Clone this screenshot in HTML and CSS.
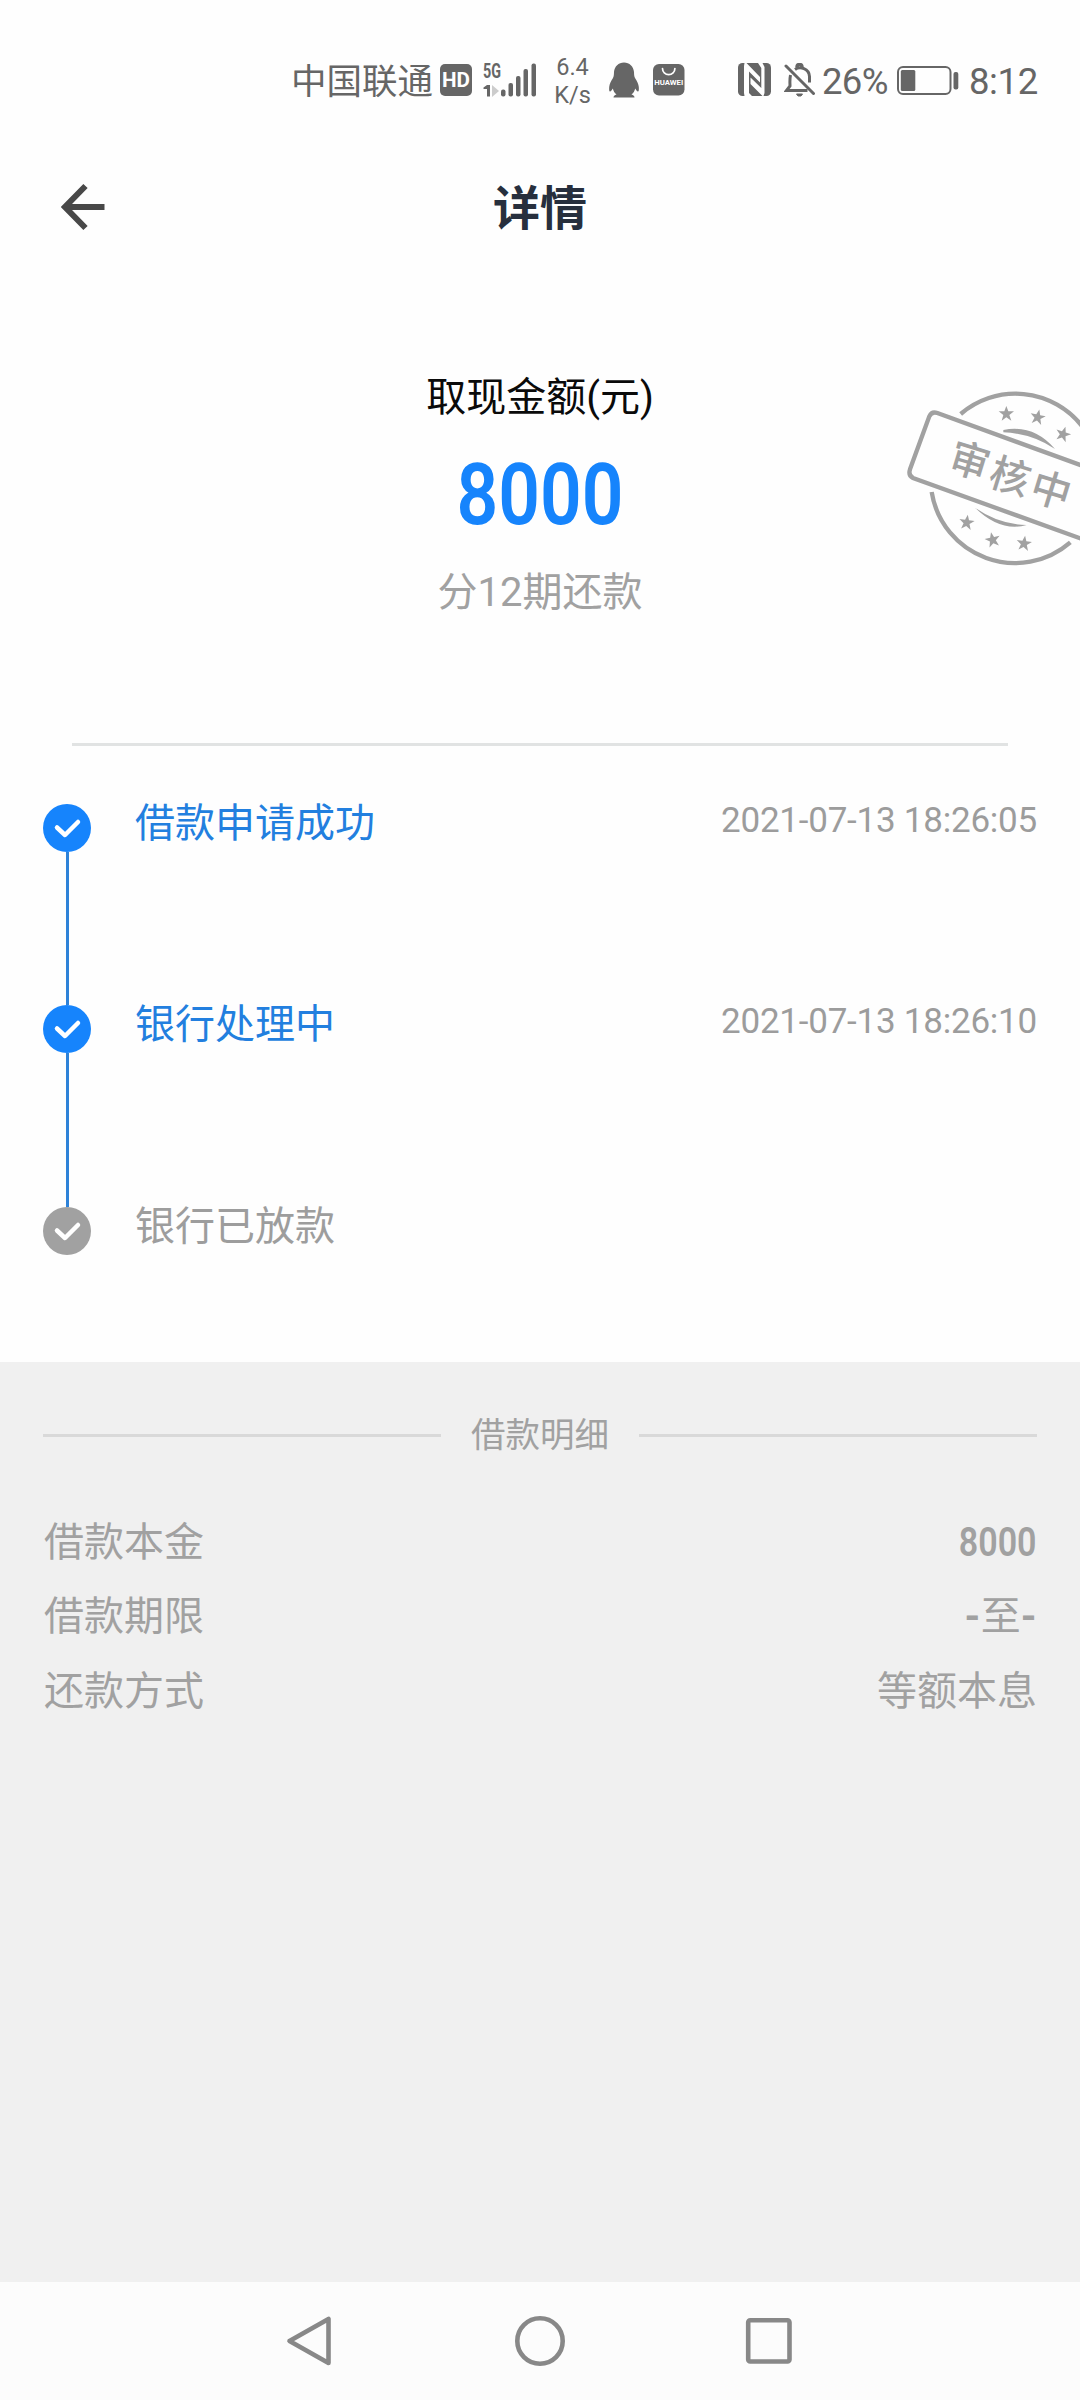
FILE: index.html
```html
<!DOCTYPE html>
<html lang="zh-CN">
<head>
<meta charset="utf-8">
<title>详情</title>
<link rel="stylesheet" href="styles.css">
</head>
<body>
<div class="screen">
  <div class="status">
    <span class="carrier">中国联通</span>
    <svg class="hd" width="32" height="32" viewBox="0 0 32 32"><rect width="32" height="32" rx="5" fill="#666"/><text x="16" y="23" text-anchor="middle" class="svg-hd" textLength="28" lengthAdjust="spacingAndGlyphs">HD</text></svg>
    <svg class="signal" width="54" height="44" viewBox="0 -6 54 44" fill="#666">
      <text x="0" y="15" class="svg-5g" textLength="18" lengthAdjust="spacingAndGlyphs">5G</text>
      <path d="M4 22h3v11.500h-3v-7.500h-3.500v-1.500z"/><path d="M9 22l7 6-7 6z" fill="#ccc"/>
      <rect x="18" y="26.500" width="4.500" height="7" rx="2"/><rect x="25.500" y="20" width="4.500" height="13.500" rx="2"/><rect x="33" y="13" width="4.500" height="20.500" rx="2"/><rect x="40.500" y="6" width="4.500" height="27.500" rx="2"/><rect x="48.500" y="0.500" width="4.500" height="33" rx="2"/>
    </svg>
    <div class="speed"><span>6.4</span><span>K/s</span></div>
    <svg class="qq" width="30" height="36" viewBox="0 0 30 36" fill="#666"><path d="M15 0.500C9.500 0.500 5.500 4.500 5 10C4.900 12 5 14 4 16C2 19 .5 22 .2 25C0 28 .2 29.500 1 29.500C2 29.500 3 28 3.800 26.500C4.500 29 5.500 31 7.500 32.500C5.500 33 4.500 34 4.500 35.500H25.500C25.500 34 24.500 33 22.500 32.500C24.500 31 25.500 29 26.200 26.500C27 28 28 29.500 29 29.500C29.800 29.500 30 28 29.800 25C29.500 22 28 19 26 16C25 14 25.100 12 25 10C24.500 4.500 20.500 0.500 15 0.500Z"/></svg>
    <svg class="huawei" width="32" height="32" viewBox="0 0 32 32"><rect width="31.500" height="31.500" rx="6" fill="#666"/><path d="M9.500 4.500a6.200 6.200 0 0 0 12.400 0" fill="none" stroke="#fff" stroke-width="1.700" stroke-linecap="round"/><text x="15.700" y="21.300" text-anchor="middle" class="svg-huawei" textLength="29" lengthAdjust="spacingAndGlyphs">HUAWEI</text></svg>
    <svg class="nfc" width="33" height="33" viewBox="0 0 33 33"><rect width="33" height="33" rx="4.500" fill="#666"/><path d="M6.500 33L6 30V3L6.500 0H8.500L22 14V19.500L11 8.500V30L14 33ZM20 0H24.500L26.500 4V30L25.500 33H24.500L12.500 21V14.500L23.300 25V5Z" fill="#fff"/></svg>
    <svg class="bell" width="32" height="34" viewBox="0 0 32 34" fill="none" stroke="#666" stroke-width="3"><path d="M2 3l27.500 27.500" stroke-linecap="round"/><path d="M6.500 12c-1 5-.5 8-.5 11l-3.500 4.500h21"/><path d="M11 6.500c5-3.500 14-1 14.500 7v6"/><path d="M13 4.500c0-4 5-4 5 0" stroke-width="3.500"/><path d="M12.500 31h6l-1.500 2h-3z" fill="#666" stroke-width="1"/></svg>
    <span class="pct">26%</span>
    <svg class="battery" width="62" height="29" viewBox="0 0 62 29"><rect x="1" y="1" width="52.500" height="27" rx="5" fill="none" stroke="#666" stroke-width="2"/><rect x="3.800" y="4" width="14.500" height="21" rx="1.500" fill="#666"/><rect x="56.500" y="6" width="4.800" height="17.500" rx="2" fill="#666"/></svg>
    <span class="clock">8:12</span>
  </div>

  <header class="topbar">
    <svg class="back" width="44" height="48" viewBox="0 0 44 48" fill="none" stroke="#484848" stroke-width="6"><path d="M24.500 3L4 24l20.500 21M5 24h38.500"/></svg>
    <h1>详情</h1>
  </header>

  <section class="summary">
    <div class="sum-label">取现金额(元)</div>
    <div class="amount">8000</div>
    <div class="term">分12期还款</div>
    <svg class="stamp" width="200" height="220" viewBox="0 0 600 660">
      <g fill="none" stroke="#a1a1a1" stroke-width="13">
        <path d="M242 132A253 253 0 0 1 605 167"/>
        <path d="M155 366A253 253 0 0 0 571 517"/>
        <path d="M620 292L172 129Q155 123 148 139L90 298Q84 316 99 324L620 512"/>
      </g>
      <path d="M370 180Q460 162 525 237Q455 190 370 187ZM285 413Q355 463 440 465Q360 487 285 413Z" fill="#a1a1a1"/>
      <defs><path id="star" d="M0-24L6-8L23-8L9 3L15 20L0 10L-14 20L-9 3L-23-8L-6-8Z"/></defs>
      <g fill="#a1a1a1"><use href="#star" x="379" y="132"/><use href="#star" transform="translate(473 142) rotate(12)"/><use href="#star" transform="translate(549 193) rotate(18)"/><use href="#star" transform="translate(260 458) rotate(8)"/><use href="#star" transform="translate(338 510) rotate(-12)"/><use href="#star" transform="translate(432 521) rotate(8)"/></g>
      <g class="svg-stamp"><text transform="translate(270 270) rotate(17)" y="46">审</text><text transform="translate(391 317) rotate(17)" y="46">核</text><text transform="translate(514 358) rotate(17)" y="46">中</text></g>
    </svg>
  </section>

  <ol class="timeline">
    <li class="done"><span class="mark"><svg width="48" height="48" viewBox="0 0 48 48"><path d="M14 23.500l8 7.500L35 18"/></svg></span><span class="step">借款申请成功</span><time>2021-07-13 18:26:05</time></li>
    <li class="done"><span class="mark"><svg width="48" height="48" viewBox="0 0 48 48"><path d="M14 23.500l8 7.500L35 18"/></svg></span><span class="step">银行处理中</span><time>2021-07-13 18:26:10</time></li>
    <li class="pending"><span class="mark"><svg width="48" height="48" viewBox="0 0 48 48"><path d="M14 23.500l8 7.500L35 18"/></svg></span><span class="step">银行已放款</span></li>
  </ol>

  <section class="detail">
    <h2>借款明细</h2>
    <dl>
      <div><dt>借款本金</dt><dd class="num">8000</dd></div>
      <div><dt>借款期限</dt><dd><b>-</b>至<b>-</b></dd></div>
      <div><dt>还款方式</dt><dd>等额本息</dd></div>
    </dl>
  </section>

  <nav class="navbar">
    <svg width="50" height="52" viewBox="0 0 50 52"><path d="M42.500 4V48L3.500 26Z"/></svg>
    <svg width="50" height="52" viewBox="0 0 50 52"><circle cx="25" cy="26" r="22.700"/></svg>
    <svg width="50" height="52" viewBox="0 0 50 52"><rect x="4.200" y="5.200" width="41.300" height="41.300" rx="2"/></svg>
  </nav>
</div>
</body>
</html>
```
FILE: styles.css
```css
* { box-sizing: border-box; margin: 0; padding: 0; }
body { background: #fff; font-family: Roboto, "Noto Sans CJK SC", sans-serif; font-weight: 400; }
svg { display: block; flex: none; }
.screen { width: 1080px; height: 2400px; display: flex; flex-direction: column; overflow: hidden; background: #fefefe; }

.status { height: 120px; flex: none; display: flex; align-items: flex-start; color: #666; white-space: nowrap; padding-left: 291px; }
.status > * { flex: none; }
.carrier { width: 149px; margin-top: 62px; font-size: 35.5px; line-height: 40px; }
.hd { margin-top: 64px; }
.svg-hd { font: 700 20px Roboto, sans-serif; fill: #fff; }
.signal { margin: 56.500px 0 0 11px; }
.svg-5g { font: 700 20px Roboto, sans-serif; }
.speed { width: 50px; margin: 54px 0 0 9px; display: flex; flex-direction: column; align-items: center; font-size: 23.500px; line-height: 27.500px; padding-left: 3px; }
.qq { margin: 62px 0 0 13px; }
.huawei { margin: 64px 0 0 14px; }
.svg-huawei { font: 700 7.500px Roboto, sans-serif; fill: #fff; }
.nfc { margin: 63px 0 0 53px; }
.bell { margin: 63px 0 0 13px; }
.pct { width: 75px; margin: 61px 0 0 6px; font-size: 36.500px; line-height: 42px; letter-spacing: -.7px; }
.battery { margin: 66px 0 0 0; }
.clock { margin: 61px 0 0 10px; font-size: 36.500px; line-height: 42px; letter-spacing: -.4px; }

.topbar { height: 174px; flex: none; display: grid; grid-template-columns: 104px 1fr 104px; align-items: start; }
.back { margin: 63px 0 0 60.500px; }
.topbar h1 { margin-top: 61px; text-align: center; font-size: 47px; line-height: 56px; font-weight: 700; color: #272f3d; }

.summary { position: relative; flex: none; height: 452px; margin: 0 72px; border-bottom: 3px solid #e1e3e3; text-align: center; }
.sum-label { padding-top: 79px; font-size: 40px; line-height: 50px; color: #0a0a0a; }
.amount { margin-top: 29px; font-size: 86px; line-height: 86px; font-weight: 600; color: #1684fc; transform: scaleX(.85); }
.term { margin-top: 30px; font-size: 40px; line-height: 50px; color: #a1a1a1; }
.stamp { position: absolute; left: 808px; top: 76px; }
.svg-stamp { font: 500 120px "Noto Sans CJK SC", sans-serif; fill: #a1a1a1; text-anchor: middle; }

.timeline { list-style: none; flex: none; height: 616px; padding: 58px 43px 0; }
.timeline li { display: flex; align-items: flex-start; height: 201.300px; }
.mark { width: 48px; height: 100%; flex: none; display: flex; flex-direction: column; align-items: center; }
.mark svg { border-radius: 50%; background: #1684fc; fill: none; stroke: #fff; stroke-width: 4.500; stroke-linecap: round; stroke-linejoin: round; }
.done .mark::after { content: ""; width: 3px; flex: 1; background: #2e82d8; }
.pending .mark svg { background: #a1a1a1; }
.step { flex: 1; margin: -5px 0 0 44px; font-size: 40px; line-height: 50px; color: #227fdf; }
.pending .step { color: #9d9d9d; }
.timeline time { margin-top: -5px; font-size: 35px; line-height: 44px; letter-spacing: -.23px; color: #9c9c9c; }

.detail { flex: 1; background: #f0f0f0; padding: 48px 43px 0; color: #a1a1a1; }
.detail h2 { display: flex; align-items: center; gap: 30px; font-size: 34.500px; line-height: 53px; font-weight: 400; height: 51px; }
.detail h2::before, .detail h2::after { content: ""; height: 3px; flex: 1; background: #d9d9d9; }
.detail dl { margin-top: 44.500px; }
.detail dl div { display: flex; justify-content: space-between; height: 74.500px; font-size: 40px; line-height: 74.500px; }
.detail dt { padding-left: 1px; }
.detail dd b { display: inline-block; font-weight: 700; letter-spacing: .5px; }
.detail .num { margin-top: -1px; font-weight: 600; font-size: 40.500px; transform: scaleX(.84); transform-origin: right; }

.navbar { height: 118px; flex: none; background: #fcfcfc; display: flex; justify-content: center; gap: 179px; padding-top: 33px; }
.navbar svg { fill: none; stroke: #888; stroke-width: 4.600; stroke-linejoin: round; }
```
